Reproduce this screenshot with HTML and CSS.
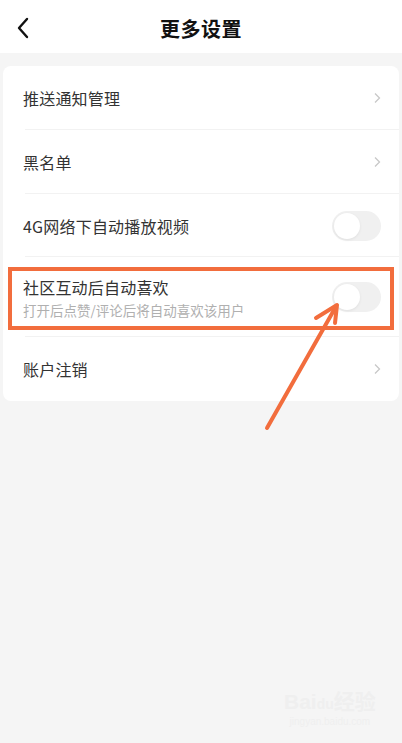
FILE: index.html
```html
<!DOCTYPE html>
<html lang="zh">
<head>
<meta charset="utf-8">
<link rel="stylesheet" href="styles.css">
</head>
<body>
<div class="page">
  <header class="topbar">
    <svg class="back" width="14" height="22" viewBox="0 0 14 22"><path d="M11 2 L3 11 L11 20" fill="none" stroke="#111" stroke-width="2.4" stroke-linecap="round" stroke-linejoin="round"/></svg>
    <h1 class="title">更多设置</h1>
  </header>
  <main class="content">
    <section class="card">
      <div class="row">
        <span class="label">推送通知管理</span>
        <svg class="chev" width="8" height="12" viewBox="0 0 8 12"><path d="M2 1.5 L6.5 6 L2 10.5" fill="none" stroke="#c8c8c8" stroke-width="1.3"/></svg>
      </div>
      <div class="row">
        <span class="label">黑名单</span>
        <svg class="chev" width="8" height="12" viewBox="0 0 8 12"><path d="M2 1.5 L6.5 6 L2 10.5" fill="none" stroke="#c8c8c8" stroke-width="1.3"/></svg>
      </div>
      <div class="row row-short">
        <span class="label">4G网络下自动播放视频</span>
        <span class="toggle"><span class="knob"></span></span>
      </div>
      <div class="row row-tall">
        <div class="texts">
          <span class="label">社区互动后自动喜欢</span>
          <span class="sub">打开后点赞/评论后将自动喜欢该用户</span>
        </div>
        <span class="toggle"><span class="knob"></span></span>
      </div>
      <div class="row row-last">
        <span class="label">账户注销</span>
        <svg class="chev" width="8" height="12" viewBox="0 0 8 12"><path d="M2 1.5 L6.5 6 L2 10.5" fill="none" stroke="#c8c8c8" stroke-width="1.3"/></svg>
      </div>
    </section>
  </main>
  <div class="highlight"></div>
  <svg class="arrow" width="402" height="743" viewBox="0 0 402 743">
    <path d="M267 428 L334 310" fill="none" stroke="#f26d3d" stroke-width="4" stroke-linecap="round"/>
    <path d="M316 318 L337 305 L335 323" fill="none" stroke="#f26d3d" stroke-width="4" stroke-linecap="round" stroke-linejoin="round"/>
  </svg>
  <div class="watermark">
    <div class="wm-top">Bai<span class="wm-du">du</span>经验</div>
    <div class="wm-url">jingyan.baidu.com</div>
  </div>
</div>
</body>
</html>
```

FILE: styles.css
```css
* { box-sizing: border-box; }
html, body {
  margin: 0;
  padding: 0;
}
body {
  width: 402px;
  height: 743px;
  background: #f5f5f5;
  font-family: "Noto Sans CJK SC", "Noto Sans", sans-serif;
  overflow: hidden;
}
.page {
  position: relative;
  width: 402px;
  height: 743px;
}
.topbar {
  height: 53px;
  background: #fff;
  display: flex;
  align-items: center;
  justify-content: center;
  position: relative;
}
.back {
  position: absolute;
  left: 16px;
  top: 17px;
}
.title {
  margin: 0;
  font-size: 20px;
  font-weight: 700;
  color: #111;
  letter-spacing: 0.5px;
  line-height: 1;
  margin-top: 4px;
}
.content {
  padding: 13px 3px 0 3px;
}
.card {
  background: #fff;
  border-radius: 8px;
  overflow: hidden;
}
.row {
  height: 64px;
  display: flex;
  align-items: center;
  justify-content: space-between;
  padding: 0 20px 0 20px;
  position: relative;
}
.row::after {
  content: "";
  position: absolute;
  left: 22px;
  right: 0;
  bottom: 0;
  height: 1px;
  background: #f2f2f2;
}
.row-last::after { display: none; }
.row-short { height: 63px; }
.row-tall { height: 80px; }
.label {
  font-size: 16px;
  color: #333;
  line-height: 1;
  letter-spacing: 0.2px;
}
.texts {
  display: flex;
  flex-direction: column;
  gap: 9px;
  margin-top: 2px;
}
.sub {
  font-size: 13.5px;
  color: #b0b0b0;
  line-height: 1;
}
.chev {
  margin-right: -2px;
}
.toggle {
  width: 49px;
  height: 30px;
  border-radius: 15px;
  background: #f0f0f0;
  position: relative;
  margin-right: -2px;
}
.knob {
  position: absolute;
  left: 2px;
  top: 2px;
  width: 26px;
  height: 26px;
  border-radius: 50%;
  background: #fff;
  box-shadow: 0 1px 3px rgba(0,0,0,0.07);
}
.highlight {
  position: absolute;
  left: 8px;
  top: 267px;
  width: 386px;
  height: 63px;
  border: 4px solid #f26d3d;
}
.arrow {
  position: absolute;
  left: 0;
  top: 0;
  pointer-events: none;
}
.watermark {
  position: absolute;
  left: 284px;
  top: 691px;
  color: #efefef;
  font-family: "Liberation Sans", "Noto Sans CJK SC", sans-serif;
  text-align: center;
}
.wm-top {
  font-size: 21px;
  font-weight: 700;
  line-height: 1;
}
.wm-du {
  font-size: 14px;
}
.wm-url {
  font-size: 10px;
  margin-top: 4px;
}
```
